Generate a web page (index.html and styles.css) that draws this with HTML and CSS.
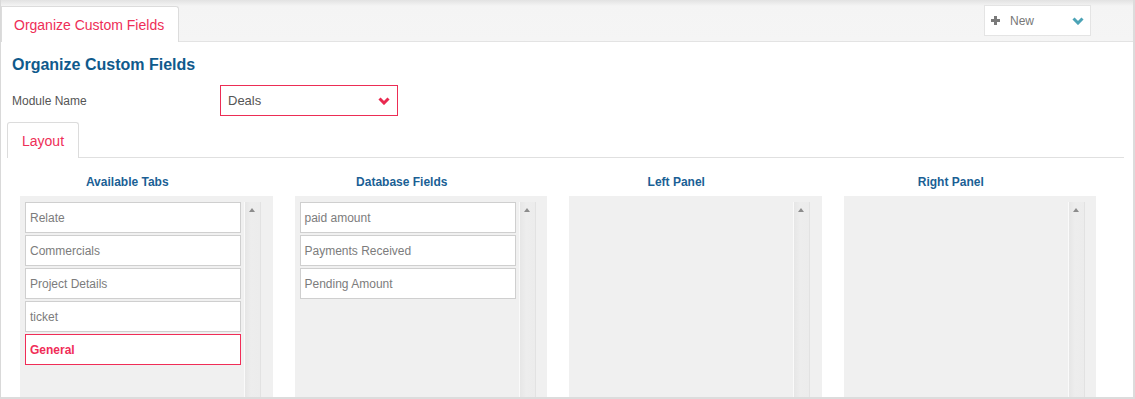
FILE: index.html
```html
<!DOCTYPE html>
<html lang="en">
<head>
    <meta charset="UTF-8">
    <meta name="viewport" content="width=device-width, initial-scale=1.0">
    <title>Organize Custom Fields</title>
    <link rel="stylesheet" href="styles.css">
</head>
<body>
    <div class="frame">
        <div class="topbar">
            <div class="page-tab">Organize Custom Fields</div>
            <div class="new-btn">
                <svg class="plus" width="9" height="9" viewBox="0 0 9 9">
                    <rect x="3" y="0" width="3" height="9" fill="#7a7a7a"/>
                    <rect x="0" y="3" width="9" height="3" fill="#7a7a7a"/>
                </svg>
                <span class="new-label">New</span>
                <svg class="chev" width="12" height="8" viewBox="0 0 12 8">
                    <polyline points="1.5,1.5 6,6 10.5,1.5" fill="none" stroke="#4ba3b6" stroke-width="3"/>
                </svg>
            </div>
        </div>

        <div class="content">
            <h2 class="title">Organize Custom Fields</h2>

            <div class="form-row">
                <label class="form-label">Module Name</label>
                <div class="select">
                    <span>Deals</span>
                    <svg width="12" height="8" viewBox="0 0 12 8">
                        <polyline points="1.5,1.5 6,6 10.5,1.5" fill="none" stroke="#e9284f" stroke-width="3"/>
                    </svg>
                </div>
            </div>

            <div class="sub-tabs">
                <div class="sub-tab">Layout</div>
            </div>

            <div class="columns">
                <div class="column">
                    <h4 class="col-title">Available Tabs</h4>
                    <div class="list-box">
                        <ul class="list">
                            <li class="item">Relate</li>
                            <li class="item">Commercials</li>
                            <li class="item">Project Details</li>
                            <li class="item">ticket</li>
                            <li class="item active">General</li>
                        </ul>
                        <div class="scrollbar"><span class="arrow"></span></div>
                    </div>
                </div>

                <div class="column">
                    <h4 class="col-title">Database Fields</h4>
                    <div class="list-box">
                        <ul class="list">
                            <li class="item">paid amount</li>
                            <li class="item">Payments Received</li>
                            <li class="item">Pending Amount</li>
                        </ul>
                        <div class="scrollbar"><span class="arrow"></span></div>
                    </div>
                </div>

                <div class="column">
                    <h4 class="col-title">Left Panel</h4>
                    <div class="list-box">
                        <ul class="list"></ul>
                        <div class="scrollbar"><span class="arrow"></span></div>
                    </div>
                </div>

                <div class="column">
                    <h4 class="col-title">Right Panel</h4>
                    <div class="list-box">
                        <ul class="list"></ul>
                        <div class="scrollbar"><span class="arrow"></span></div>
                    </div>
                </div>
            </div>
        </div>
    </div>
</body>
</html>
```

FILE: styles.css
```css
body {
    margin: 0;
    font-family: "Liberation Sans", Arial, sans-serif;
    background: #fff;
}

.frame {
    width: 1135px;
    height: 399px;
    box-sizing: border-box;
    border-left: 1px solid #d9d9d9;
    border-right: 2px solid #dcdcdc;
    border-bottom: 2px solid #dcdcdc;
    overflow: hidden;
}

/* top tab bar */
.topbar {
    height: 42px;
    box-sizing: border-box;
    display: flex;
    justify-content: space-between;
    align-items: flex-end;
    background: linear-gradient(#e2e2e2, #f4f4f4 6px, #f5f5f5);
    border-bottom: 1px solid #e3e3e3;
}

.page-tab {
    height: 36px;
    box-sizing: border-box;
    margin-bottom: -1px;
    padding: 0 14px 0 12px;
    display: flex;
    align-items: center;
    background: #fff;
    border: 1px solid #dcdcdc;
    border-bottom: none;
    border-radius: 0 3px 0 0;
    color: #ee2e57;
    font-size: 14px;
}

.new-btn {
    align-self: flex-start;
    margin: 5px 42px 0 0;
    width: 107px;
    height: 31px;
    box-sizing: border-box;
    display: flex;
    align-items: center;
    padding: 0 6px 0 6px;
    background: #fff;
    border: 1px solid #e4e4e4;
}

.new-btn .plus {
    margin-right: 10px;
}

.new-label {
    flex: 1;
    font-size: 12px;
    color: #777;
}

/* content */
.content {
    padding-top: 14px;
}

.title {
    margin: 0 0 0 11px;
    font-size: 16px;
    line-height: 18px;
    font-weight: bold;
    color: #0f5a8c;
}

.form-row {
    display: flex;
    align-items: center;
    margin: 11px 0 0 11px;
}

.form-label {
    width: 208px;
    font-size: 12px;
    color: #555;
}

.select {
    width: 178px;
    height: 31px;
    box-sizing: border-box;
    display: flex;
    align-items: center;
    justify-content: space-between;
    padding: 0 7px 0 7px;
    border: 1px solid #ec2d55;
    font-size: 13px;
    color: #555;
}

.sub-tabs {
    display: flex;
    margin: 6px 9px 0 6px;
    border-bottom: 1px solid #e0e0e0;
}

.sub-tab {
    height: 36px;
    box-sizing: border-box;
    margin-bottom: -1px;
    padding: 0 14px;
    display: flex;
    align-items: center;
    background: #fff;
    border: 1px solid #dcdcdc;
    border-bottom: none;
    border-radius: 3px 3px 0 0;
    color: #ee2e57;
    font-size: 14px;
}

/* columns */
.columns {
    display: grid;
    grid-template-columns: repeat(4, 1fr);
    column-gap: 22px;
    width: 1076px;
    margin-left: 19px;
    padding-top: 17px;
}

.col-title {
    margin: 0 0 6px 0;
    padding-right: 38px;
    text-align: center;
    font-size: 12px;
    line-height: 15px;
    font-weight: bold;
    color: #1b5f95;
}

.list-box {
    display: flex;
    height: 230px;
    padding: 6px 0 0 5px;
    background: #f0f0f0;
}

.list {
    list-style: none;
    margin: 0;
    padding: 0;
    width: 216px;
}

.item {
    height: 31px;
    box-sizing: border-box;
    margin-bottom: 2px;
    padding-left: 4px;
    display: flex;
    align-items: center;
    background: #fff;
    border: 1px solid #cfcfcf;
    font-size: 12px;
    color: #7c7c7c;
}

.item.active {
    border-color: #f02d57;
    color: #f02d57;
    font-weight: bold;
}

.scrollbar {
    position: relative;
    width: 15px;
    margin-left: 3px;
    background: linear-gradient(90deg, #e6e6e6, #ededed 40%, #ececec);
    border-left: 1px solid #fafafa;
    border-right: 1px solid #e2e2e2;
}

.arrow {
    position: absolute;
    top: 6px;
    left: 4px;
    width: 0;
    height: 0;
    border-left: 3.5px solid transparent;
    border-right: 3.5px solid transparent;
    border-bottom: 4px solid #8c8c8c;
}
```
